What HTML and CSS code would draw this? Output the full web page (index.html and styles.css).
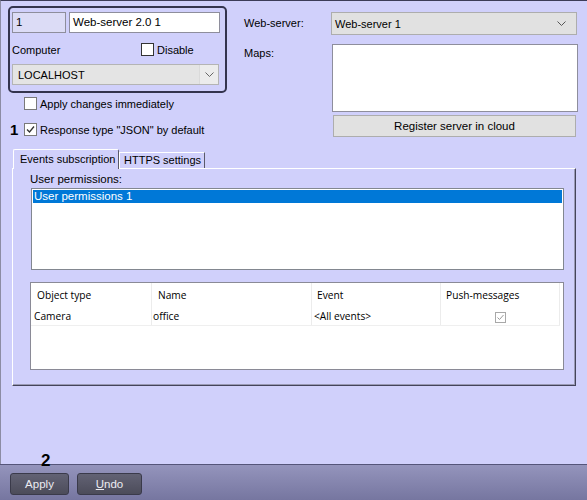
FILE: index.html
```html
<!DOCTYPE html>
<html>
<head>
<meta charset="utf-8">
<link rel="stylesheet" href="styles.css">
</head>
<body>
<div class="window">
  <div class="main">
    <div class="top">
      <div class="leftcol">
        <div class="group">
          <div class="row1">
            <div class="field fid">1</div>
            <div class="field fname">Web-server 2.0 1</div>
          </div>
          <div class="row2">
            <span class="complbl">Computer</span>
            <span class="chk"><span class="box"></span>Disable</span>
          </div>
          <div class="combo lh">
            <span>LOCALHOST</span>
            <span class="arrowbox"><svg width="9" height="6" viewBox="0 0 9 6"><polyline points="0.5,0.5 4.5,4.5 8.5,0.5" fill="none" stroke="#666" stroke-width="1"/></svg></span>
          </div>
        </div>
        <div class="opt opt1"><span class="chk"><span class="box light"></span>Apply changes immediately</span></div>
        <div class="opt opt2"><span class="num">1</span><span class="chk"><span class="box light"><svg width="11" height="11" viewBox="0 0 11 11"><polyline points="2,5.5 4.5,8 9,2.5" fill="none" stroke="#333" stroke-width="1.3"/></svg></span>Response type "JSON" by default</span></div>
      </div>
      <div class="rightcol">
        <div class="rrow">
          <span class="lbl">Web-server:</span>
          <div class="combo ws">
            <span>Web-server 1</span>
            <svg class="chev" width="9" height="6" viewBox="0 0 9 6"><polyline points="0.5,0.5 4.5,4.5 8.5,0.5" fill="none" stroke="#555" stroke-width="1"/></svg>
          </div>
        </div>
        <div class="rrow maps">
          <span class="lbl">Maps:</span>
          <div class="mapsbox"></div>
        </div>
        <div class="register">Register server in cloud</div>
      </div>
    </div>
    <div class="tabs">
      <div class="tab active">Events subscription</div>
      <div class="tab">HTTPS settings</div>
    </div>
    <div class="panel">
      <div class="uplbl">User permissions:</div>
      <div class="list">
        <div class="sel">User permissions 1</div>
      </div>
      <div class="table">
        <div class="trow thead">
          <div class="c c1 p7">Object type</div>
          <div class="c c2 p6">Name</div>
          <div class="c c3 p5">Event</div>
          <div class="c c4 p5">Push-messages</div>
        </div>
        <div class="trow tdata">
          <div class="c c1 p4">Camera</div>
          <div class="c c2 p1">office</div>
          <div class="c c3 p2">&lt;All events&gt;</div>
          <div class="c c4 center"><span class="minichk"><svg width="9" height="9" viewBox="0 0 9 9"><polyline points="1.5,4.5 3.5,6.5 7.5,2" fill="none" stroke="#9a9a9a" stroke-width="1"/></svg></span></div>
        </div>
      </div>
    </div>
    <div class="num2">2</div>
  </div>
  <div class="bar">
    <div class="btn b-apply">Apply</div>
    <div class="btn b-undo"><u>U</u>ndo</div>
  </div>
</div>
</body>
</html>
```
FILE: styles.css
```css
* { box-sizing: border-box; }
html, body { margin: 0; padding: 0; }
body {
  width: 587px;
  height: 500px;
  overflow: hidden;
  background: #d0d0fb;
  font-family: "Liberation Sans", Arial, sans-serif;
  font-size: 11px;
  color: #000;
}
.window { width: 587px; height: 500px; display: flex; flex-direction: column; }
.main {
  position: relative;
  height: 464px;
  border-top: 1px solid #3c3c58;
  border-left: 1px solid #8c8ca4;
  display: flex;
  flex-direction: column;
}
.top { display: flex; padding-left: 7px; padding-top: 5px; }
.leftcol { display: flex; flex-direction: column; width: 219px; }
.group {
  width: 219px;
  height: 87px;
  border: 2px solid #34344e;
  border-radius: 5px;
  padding: 4px 0 0 2px;
}
.row1 { display: flex; gap: 3px; height: 21px; }
.field {
  height: 21px;
  border: 1px solid #8e8e9c;
  padding: 0 3px;
  line-height: 19px;
  font-size: 11.5px;
}
.fid { width: 54px; background: #dcdcf6; }
.fname { width: 151px; background: #fff; }
.row2 { display: flex; align-items: center; height: 13px; margin-top: 10px; }
.complbl { width: 129px; }
.chk { display: flex; align-items: center; white-space: nowrap; }
.box {
  width: 13px; height: 13px;
  border: 1px solid #333;
  background: #fff;
  margin-right: 3px;
  display: flex; align-items: center; justify-content: center;
}
.box.light { border-color: #7a7a7a; }
.combo {
  display: flex; align-items: center; justify-content: space-between;
  border: 1px solid #b4b4b4;
}
.lh {
  width: 207px; height: 21px; margin-top: 8px;
  background: #e4e4e4; padding-left: 5px;
}
.arrowbox {
  width: 19px; height: 19px;
  background: #ececec; border-left: 1px solid #dadada;
  display: flex; align-items: center; justify-content: center;
}
.opt { display: flex; align-items: center; height: 13px; }
.opt1 { margin-top: 4px; padding-left: 16px; }
.opt2 { margin-top: 13px; padding-left: 2px; }
.num { width: 14px; font-weight: bold; font-size: 15px; line-height: 13px; }
.rightcol { margin-left: 17px; margin-top: 6px; width: 334px; display: flex; flex-direction: column; }
.rrow { display: flex; }
.lbl { width: 87px; line-height: 23px; }
.ws { width: 246px; height: 23px; background: #e1e1e1; border-color: #adadad; padding: 0 10px 0 3px; }
.maps { margin-top: 9px; }
.maps .lbl { width: 88px; line-height: 14px; padding-top: 2px; }
.mapsbox { width: 246px; height: 68px; background: #fff; border: 1px solid #8e8e9c; }
.register {
  margin-top: 3px; margin-left: 89px;
  width: 243px; height: 22px;
  background: #e1e1e1; border: 1px solid #adadad;
  text-align: center; line-height: 20px;
  font-size: 11.5px;
}
.tabs { display: flex; align-items: flex-end; padding-left: 12px; margin-top: 12px; height: 19px; }
.tab {
  height: 16px;
  border-top: 1px solid #fff;
  border-left: 1px solid #fff;
  border-right: 1px solid #5a5a6a;
  padding: 0 4px 0 4px;
  line-height: 15px;
  width: 86px;
  white-space: nowrap;
  font-size: 11px;
}
.tab.active {
  height: 20px; width: 106px;
  margin-bottom: -1px;
  background: #d0d0fb;
  position: relative; z-index: 1;
  padding-left: 6px;
  line-height: 19px;
  border-radius: 2px 2px 0 0;
}
.panel {
  margin-left: 11px;
  width: 564px;
  height: 218px;
  border-top: 1px solid #fff;
  border-left: 1px solid #fff;
  border-right: 1px solid #44445a;
  border-bottom: 1px solid #44445a;
  box-shadow: inset -1px -1px 0 #9a9ab4;
  padding: 2px 0 0 17px;
}
.uplbl { line-height: 16px; font-size: 11.5px; }
.list {
  margin-top: 1px; margin-left: 1px;
  width: 533px; height: 82px;
  background: #fff; border: 1px solid #828790;
  padding: 1px;
}
.sel { background: #0078d7; color: #fff; height: 13px; line-height: 13px; padding-left: 1px; font-size: 11.5px; }
.table {
  margin-top: 12px;
  width: 534px; height: 88px;
  background: #fff; border: 1px solid #8a8a96;
  font-family: "Open Sans", "Noto Sans", sans-serif;
  font-size: 10.2px;
}
.trow { display: flex; }
.thead { height: 26px; }
.thead .c { line-height: 25px; }
.tdata { height: 17px; border-bottom: 1px solid #efefef; width: 529px; }
.tdata .c { line-height: 15px; }
.c { border-right: 1px solid #ececec; white-space: nowrap; }
.c1 { width: 121px; }
.c2 { width: 160px; }
.c3 { width: 129px; }
.c4 { width: 119px; }
.p7 { padding-left: 6px; } .p6 { padding-left: 6px; } .p5 { padding-left: 5px; }
.p4 { padding-left: 3px; } .p2 { padding-left: 2px; } .p1 { padding-left: 1px; }
.center { display: flex; align-items: center; justify-content: center; }
.minichk { width: 11px; height: 11px; border: 1px solid #a8a8a8; display: flex; align-items: center; justify-content: center; background: #fff; }
.num2 {
  position: absolute; left: 40px; top: 452px;
  font-weight: bold; font-size: 17px; line-height: 16px; z-index: 2;
}
.bar {
  height: 36px;
  border-top: 1px solid #55557a;
  background: linear-gradient(#9494bc, #7676a0);
  display: flex; align-items: flex-start;
  padding: 8px 0 0 10px;
}
.btn {
  height: 22px;
  border: 1px solid #3a3a4a;
  border-radius: 3px;
  background: linear-gradient(#626274, #4c4c5a);
  color: #ececf2;
  text-align: center; line-height: 20px;
  font-size: 11.5px;
}
.b-apply { width: 59px; }
.b-undo { width: 65px; margin-left: 8px; }
```
